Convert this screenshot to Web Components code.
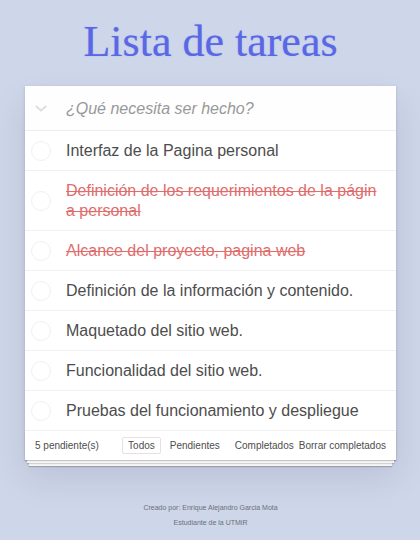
<!DOCTYPE html>
<html lang="es">
<head>
<meta charset="utf-8">
<meta name="viewport" content="width=device-width, initial-scale=1">
<title>Lista de tareas</title>
<style>
body { margin: 0; min-height: 100vh; background: #ced6ea; color: #4d4d4d; font: 16px/20px "Liberation Sans", Arial, sans-serif; }
</style>
</head>
<body>
<todo-app>
  <todo-item>Interfaz de la Pagina personal</todo-item>
  <todo-item done>Definición de los requerimientos de la página personal</todo-item>
  <todo-item done>Alcance del proyecto, pagina web</todo-item>
  <todo-item>Definición de la información y contenido.</todo-item>
  <todo-item>Maquetado del sitio web.</todo-item>
  <todo-item>Funcionalidad del sitio web.</todo-item>
  <todo-item>Pruebas del funcionamiento y despliegue</todo-item>
  <page-credits slot="credits"></page-credits>
</todo-app>

<template id="app">
  <style>
    :host { display: block; padding: 17px 24px 12px 25px; }
    h1 { margin: 0 0 19px; font: 400 44px/50px "Liberation Serif", "Times New Roman", serif; color: #5a68e6; text-align: center; text-shadow: 0 0 1px rgba(90,104,230,.5); }
    main { background: #fff; box-shadow: 0 1px 3px rgba(0,0,0,.15), 0 17px 34px rgba(0,0,0,.1); }
  </style>
  <h1>Lista de tareas</h1>
  <main>
    <todo-entry></todo-entry>
    <div role="list"><slot></slot></div>
    <todo-footer></todo-footer>
  </main>
  <slot name="credits"></slot>
</template>

<template id="entry">
  <style>
    :host { display: flex; align-items: center; height: 44px; border-bottom: 1px solid #eee; background: #fefefe; }
    label { flex: none; display: grid; place-items: center; width: 31px; height: 44px; margin-right: 10px; }
    input[type=checkbox] { appearance: none; margin: 0; grid-area: 1 / 1; width: 24px; height: 24px; }
    svg { grid-area: 1 / 1; width: 12px; height: 7px; pointer-events: none; }
    .new { flex: 1; min-width: 0; box-sizing: border-box; height: 44px; padding: 2px 0 0; border: 0; outline: 0; background: none; font: inherit; color: inherit; }
    .new::placeholder { font-style: italic; color: #999; opacity: 1; }
  </style>
  <label><input type="checkbox" aria-label="Marcar todas"><svg viewBox="0 0 12 7" fill="none" stroke="#dedede" stroke-width="2"><path d="M.7.9 6 5.4 11.3.9"/></svg></label>
  <input class="new" type="text" placeholder="¿Qué necesita ser hecho?" aria-label="Nueva tarea">
</template>

<template id="item">
  <style>
    :host { display: flex; align-items: center; padding: 10px 14px 9px 6px; border-bottom: 1px solid #f0f0f0; }
    input { appearance: none; flex: none; box-sizing: border-box; width: 20px; height: 20px; margin: 0 15px 0 0; border: 1px solid #f0f0f0; border-radius: 50%; }
    label { flex: 1; min-width: 0; word-break: break-all; line-height: 20px; }
    :host([done]) label { color: #e06c6c; text-decoration: line-through; }
  </style>
  <input type="checkbox" id="t"><label for="t"><slot></slot></label>
</template>

<template id="footer">
  <style>
    :host { display: flex; align-items: center; padding: 6px 10px 6px; font-size: 10px; line-height: 16px; white-space: nowrap;
      box-shadow: 0 1px 1px rgba(0,0,0,.2), 0 5px 0 -2px #f6f6f6, 0 6px 1px -2px rgba(0,0,0,.15), 0 10px 0 -4px #f6f6f6, 0 11px 1px -4px rgba(0,0,0,.2); }
    nav { display: flex; gap: 3px; margin: 0 -1px 0 auto; }
    a { padding: 0 5px; border: 1px solid transparent; border-radius: 2px; line-height: 15px; color: inherit; text-decoration: none; }
    a[aria-current] { border-color: #ecdfdf; }
    button { padding: 0; border: 0; background: none; font: inherit; color: inherit; }
  </style>
  <span>5 pendiente(s)</span>
  <nav><a href="#todos" aria-current="page">Todos</a><a href="#pendientes">Pendientes</a><a href="#completados">Completados</a></nav>
  <button type="button">Borrar completados</button>
</template>

<template id="credits">
  <style>
    :host { display: block; margin-top: 40px; font-size: 7px; line-height: 15px; color: #6c6f78; text-align: center; }
    p { margin: 0; }
  </style>
  <p>Creado por: Enrique Alejandro Garcia Mota</p>
  <p>Estudiante de la UTMiR</p>
</template>

<script>
class TemplateElement extends HTMLElement {
  constructor() {
    super();
    this.attachShadow({ mode: "open" }).append(
      document.getElementById(this.constructor.template).content.cloneNode(true));
  }
}
class TodoEntry extends TemplateElement { static template = "entry"; }
class TodoItem extends TemplateElement {
  static template = "item";
  connectedCallback() {
    this.setAttribute("role", "listitem");
    const box = this.shadowRoot.querySelector("input");
    box.checked = this.hasAttribute("done");
    box.onchange = () => this.toggleAttribute("done", box.checked);
  }
}
class TodoFooter extends TemplateElement { static template = "footer"; }
class PageCredits extends TemplateElement { static template = "credits"; }
class TodoApp extends TemplateElement { static template = "app"; }
customElements.define("todo-entry", TodoEntry);
customElements.define("todo-item", TodoItem);
customElements.define("todo-footer", TodoFooter);
customElements.define("page-credits", PageCredits);
customElements.define("todo-app", TodoApp);
</script>
</body>
</html>
